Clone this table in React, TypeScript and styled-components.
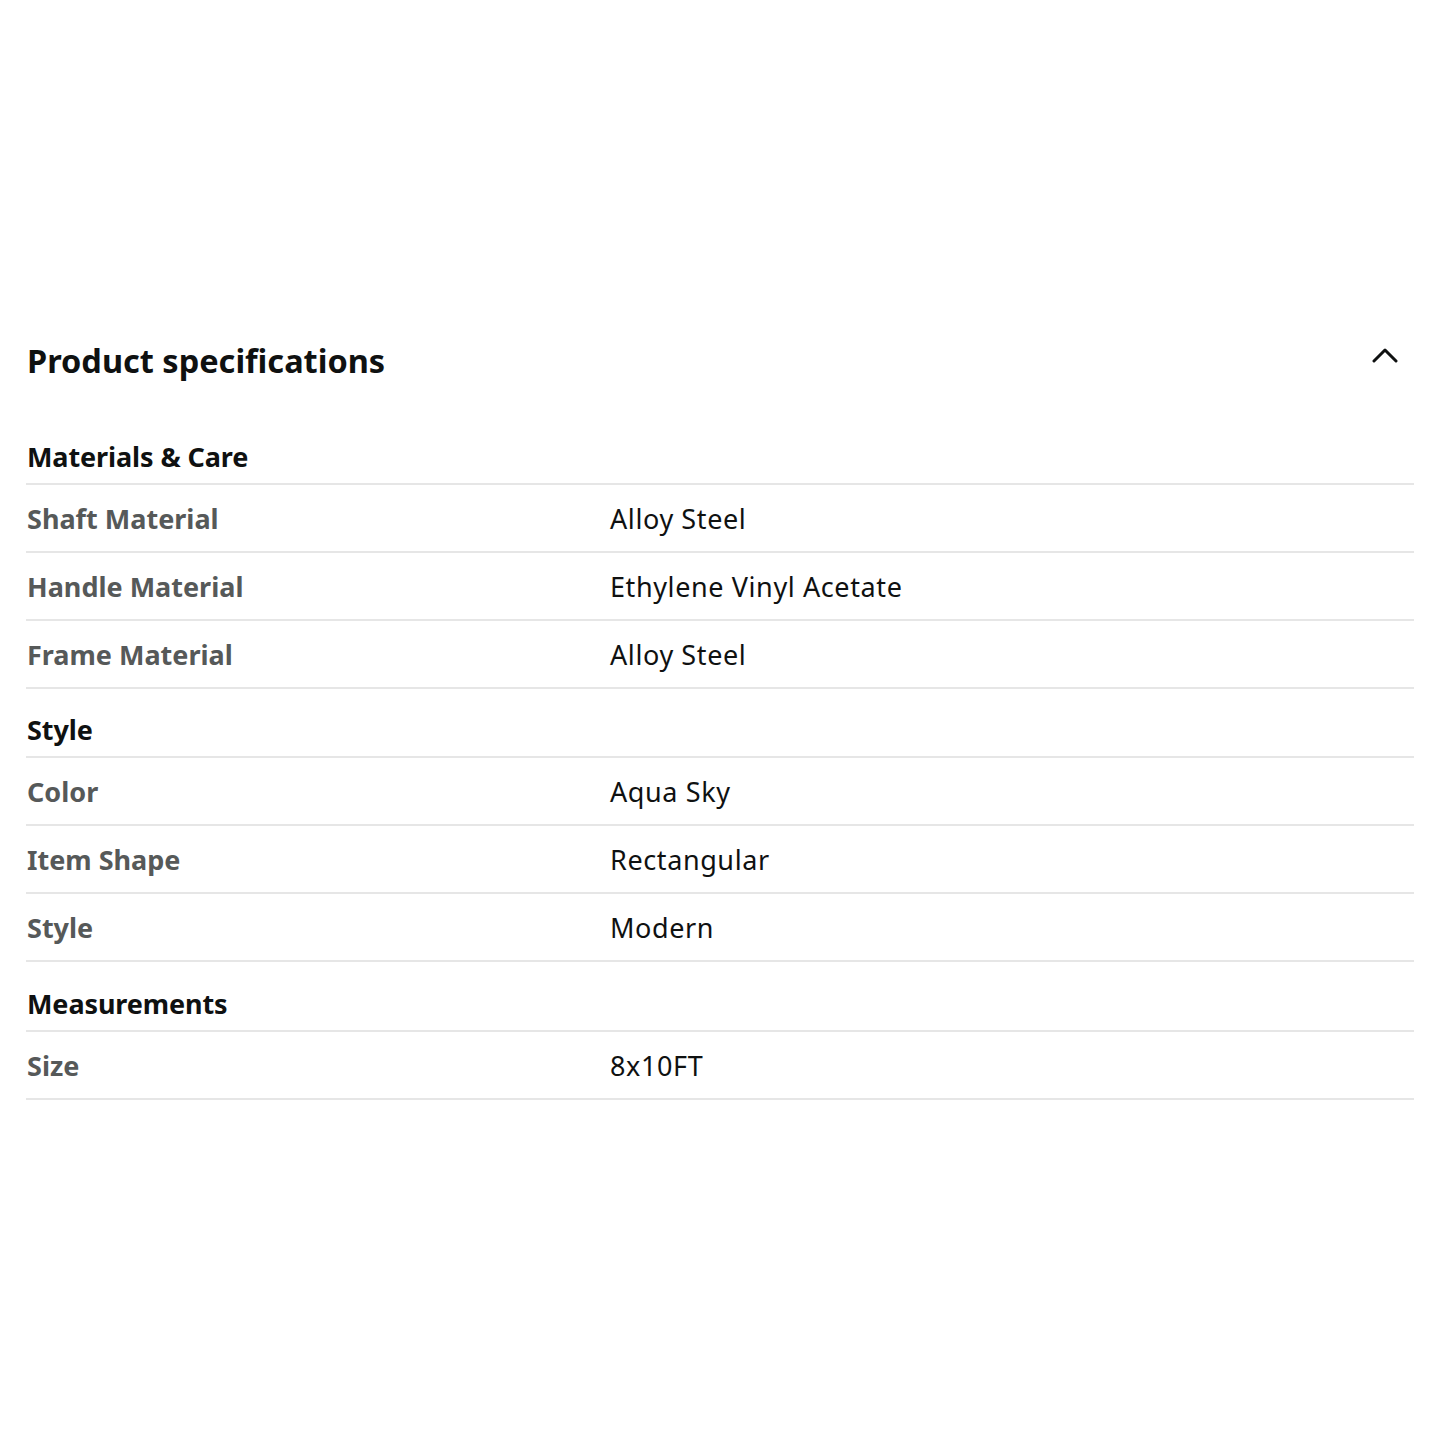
import React from "react";
import styled, { createGlobalStyle } from "styled-components";

const Global = createGlobalStyle`
  html, body { margin: 0; padding: 0; background: #fff; }
  body { font-family: "Noto Sans", "Open Sans", Arial, sans-serif; color: #0f1111; }
`;

const Page = styled.div`
  width: 1440px;
  min-height: 1440px;
  box-sizing: border-box;
  padding: 307px 26px 0 26px;
`;

const HeadingRow = styled.div`
  display: flex;
  align-items: center;
  justify-content: space-between;
  height: 109px;
  margin-top: -1px;
  margin-bottom: 1px;
`;

const Heading = styled.h2`
  margin: 0 0 0 1px;
  font-size: 32.5px;
  font-weight: 700;
  color: #0f1111;
  letter-spacing: 0;
`;

const ChevronButton = styled.button`
  border: none;
  background: none;
  padding: 0;
  margin: 0 14px 12px 0;
  width: 30px;
  height: 30px;
  display: flex;
  align-items: center;
  justify-content: center;
  cursor: pointer;
`;

const Table = styled.div`
  display: flex;
  flex-direction: column;
`;

const SectionHeader = styled.div<{ $tall?: boolean }>`
  height: ${(p) => (p.$tall ? 70 : 69)}px;
  display: flex;
  align-items: flex-end;
  padding: 0 0 8px 1px;
  box-sizing: border-box;
  border-bottom: 2px solid #e6e6e6;
  font-size: 27px;
  font-weight: 700;
  letter-spacing: -0.1px;
  color: #0f1111;
`;

const Row = styled.div`
  height: 68px;
  box-sizing: border-box;
  display: grid;
  grid-template-columns: 584px 1fr;
  align-items: center;
  border-bottom: 2px solid #e6e6e6;
`;

const Label = styled.div`
  padding-left: 1px;
  font-size: 27px;
  font-weight: 700;
  letter-spacing: 0;
  color: #565959;
`;

const Value = styled.div`
  font-size: 27px;
  font-weight: 400;
  letter-spacing: 0.6px;
  color: #0f1111;
`;

type Section = { title: string; tall?: boolean; rows: [string, string][] };

const sections: Section[] = [
  {
    title: "Materials & Care",
    rows: [
      ["Shaft Material", "Alloy Steel"],
      ["Handle Material", "Ethylene Vinyl Acetate"],
      ["Frame Material", "Alloy Steel"],
    ],
  },
  {
    title: "Style",
    rows: [
      ["Color", "Aqua Sky"],
      ["Item Shape", "Rectangular"],
      ["Style", "Modern"],
    ],
  },
  {
    title: "Measurements",
    tall: true,
    rows: [["Size", "8x10FT"]],
  },
];

export default function App() {
  return (
    <>
      <Global />
      <Page>
        <HeadingRow>
          <Heading>Product specifications</Heading>
          <ChevronButton aria-label="Collapse">
            <svg width="26" height="16" viewBox="0 0 26 16" fill="none">
              <path d="M2 14 L13 3 L24 14" stroke="#0f1111" strokeWidth="3" strokeLinecap="round" strokeLinejoin="round" />
            </svg>
          </ChevronButton>
        </HeadingRow>
        <Table>
          {sections.map((s) => (
            <React.Fragment key={s.title}>
              <SectionHeader $tall={s.tall}>{s.title}</SectionHeader>
              {s.rows.map(([k, v]) => (
                <Row key={s.title + k}>
                  <Label>{k}</Label>
                  <Value>{v}</Value>
                </Row>
              ))}
            </React.Fragment>
          ))}
        </Table>
      </Page>
    </>
  );
}
